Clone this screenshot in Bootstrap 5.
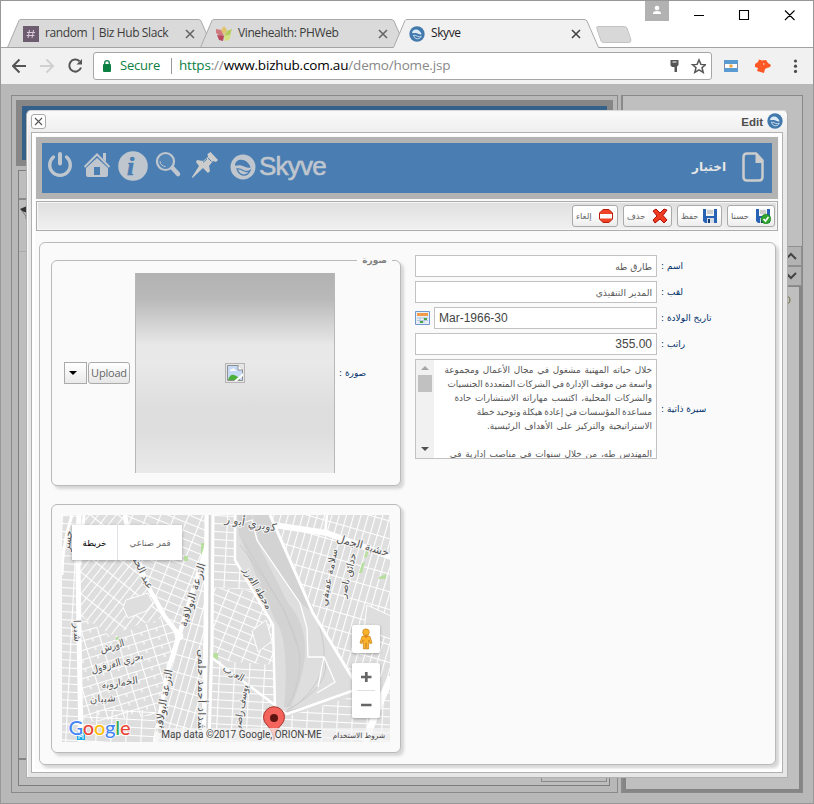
<!DOCTYPE html>
<html lang="en">
<head>
<meta charset="utf-8">
<title>Skyve</title>
<link href="https://cdn.jsdelivr.net/npm/bootstrap@5.3.0/dist/css/bootstrap.min.css" rel="stylesheet">
<style>
body{width:814px;height:804px;overflow:hidden;font-family:"Liberation Sans","DejaVu Sans",sans-serif;font-size:12px;line-height:1.2;color:#444}
svg{display:block;flex:none}
.win{width:814px;height:804px;border:1px solid #979797;background:#b8b8b8}
.chrome-ui{font-family:"Open Sans","Noto Sans",sans-serif}
.titlebar{height:47px;background:#fff;padding-left:6px}
.titlebar::after{content:"";position:absolute;left:0;right:0;bottom:0;height:1px;background:#a3a3a3}
.tab{width:206px;height:29px;font-size:12px;letter-spacing:-.4px;margin-right:-13px;padding-left:16px;color:#3c3c3c}
.tab>.shape{position:absolute;left:0;top:0}
.tab .lbl{width:140px;margin-left:6px;white-space:nowrap}
.tab.front{z-index:3;color:#222}
.newtab{margin-left:10px}
.tool{height:36px;background:#f1f1f1;padding:4px 0 4px 11px}
.omni{width:620px;height:28px;border:1px solid #a6a6a6;border-radius:3px;background:#fff;font-size:13.5px;padding:0 5px 1px 8px;color:#888;white-space:nowrap}
.secure{width:42px;margin:0 9px 0 8px;font-size:13px;letter-spacing:-.2px}
.addr{letter-spacing:-.18px;margin-left:7px}
.green{color:#0b8043}
.sep{width:1px;height:16px;background:#999}
.page{height:719px}
.back{padding:11px 10px 10px 10px;height:719px}
.bk-l{width:607px;border:1px solid #8a8a8a;padding:4px}
.bk-r{width:182px;border:1px solid #8a8a8a;border-left-width:2px;background:#bfbfbf}
.bk-space{height:150px}
.bk-head{height:66px;background:#356089;border:6px solid #868686}
.bk-body{margin:4px 3px 2px 2px;border:1px solid #7e7e7e;height:616px;background:#bdbdbd}
.bk-body>.r1{height:29px;border-bottom:2px solid #8a8a8a}
.bk-body>.r2{height:52px;background:#bdbdbd;padding-top:5px;border-bottom:1px solid #aaa}
.bk-body>.r3{height:508px;border-bottom:2px solid #858585}
.bk-body>.r4{width:66px;border:1px solid #8a8a8a;height:22px;margin-right:2px}
.bk-btn{height:20px;border:1px solid #8f8f8f;background:#b3b3b3;padding-right:4px}
.bk-low{border:3px solid #858585;border-width:1px 3px 3px;background:#bfbfbf}
.dlg{position:absolute;left:25px;top:26px;width:762px;height:668px;border:1px solid #b0b0b0;border-top-color:#d8d8d8;border-radius:5px 5px 0 0;background:linear-gradient(#fafafa,#e9e9e9 30px,#e6e6e6);box-shadow:inset 1px 1px #f8f8f8;padding:0 4px 4px}
.dlg-head{height:21px;font-size:11.5px;font-weight:bold;color:#4d4d4d;padding-bottom:2px}
.xbtn{width:15px;height:15px;border:1px solid #a9a9a9;border-radius:3px;background:#fff;margin-top:2px}
.frame{width:752px;height:641px;border:1px solid #b0b0b0;background:#fafafa;padding:4px;box-shadow:inset 0 0 0 3px #fff}
.banner{height:62px;border:6px solid #b3b3b3;background:#4a7eb2;color:#c0c6ce;padding:0 8px 2px 5px}
.brand{font-size:26px;color:#c0c6ce;-webkit-text-stroke:.6px #c0c6ce;letter-spacing:-.8px;margin-left:3px}
.title{font:bold 12px "DejaVu Sans",sans-serif;color:#e6e6e6}
.bar{height:30px;margin-top:2px;border:1px solid #acacac;background:linear-gradient(#dfdfdf,#f1f1f1);box-shadow:inset 0 0 0 1px #f6f6f6;padding:0 2px;gap:5px}
.tb{height:22px;border:1px solid #aaa;border-radius:3px;background:linear-gradient(#fff,#fff 40%,#ececec);font:8.5px "DejaVu Sans",sans-serif;color:#666;padding:0 3px}
.w46{width:46px}.w49{width:49px}.w45{width:45px}.w48{width:48px}
.pane{background:#fafafa;border:1px solid #bababa;border-radius:6px;box-shadow:3px 3px 3px #d6d6d6}
.main-pane{width:737px;height:523px;margin:11px 0 0 3px;padding:12px 11px}
.fset{width:350px;height:226px;margin-top:5px;padding:12px}
.legend-txt{position:absolute;top:-9px;right:8px;background:#fafafa;padding:0 5px;font:bold 9px/16px "DejaVu Sans",sans-serif;color:#808080}
.map-pane{width:350px;height:249px;margin-top:18px;padding:10px}
.up-sel{width:23px;height:22px;border:1px solid #aaa;background:linear-gradient(#fff,#eaeaea)}
.up{width:42px;height:22px;border:1px solid #aaa;border-radius:3px;background:linear-gradient(#fff,#e6e6e6);margin:0 5px 0 1px;font:11px/20px "Open Sans",sans-serif;letter-spacing:-.2px;color:#666}
.pic{width:200px;height:200px;border:1px solid #b8b8b8;border-width:0 1px;background:linear-gradient(#b2b2b2,#b9b9b9 13%,#e8e8e8 36%,#e9e9e9 44%,#dedede 67%,#dedede 80%,#eaeaea)}
.brk{width:20px;height:20px;border:1px solid #b5b5b5;background:#e6e6e6}
.cap{font:9px "DejaVu Sans",sans-serif;color:#003168;margin-left:4px;white-space:nowrap}
.form-col{margin-left:14px;gap:4px}
.fld{width:242px;height:22px;border:1px solid #c2c2c2;background:#fff;padding:0 4px;color:#444;white-space:nowrap}
.fld.short{width:223px}
.ar{font:9.2px "DejaVu Sans",sans-serif;color:#555}
.area{width:242px;height:100px;border:1px solid #c2c2c2;background:#fff;overflow:hidden}
.sb{width:18px;flex:none;background:#f1f1f1;padding:6px 0}
.thumb{width:14px;height:17px;background:#c1c1c1}
.lines{font:8.9px/14px "DejaVu Sans",sans-serif;color:#555;padding:3px 4px 0 0;white-space:nowrap}
.wp{word-spacing:1px}.wm{word-spacing:-.9px}
.map{width:328px;height:227px;overflow:hidden}
.mt{position:absolute;left:10px;top:10px;height:35px;background:#fff;box-shadow:0 1px 3px rgba(0,0,0,.3);font:8.5px "DejaVu Sans",sans-serif;color:#666}
.mt .m1{width:46px}.mt .m2{width:64px}
.ctl{position:absolute;left:290px;width:28px;background:#fff;border-radius:2px;box-shadow:0 1px 3px rgba(0,0,0,.3)}
.peg{top:110px;height:28px}.zoomer{top:148px;height:55px}
.attr{position:absolute;right:0;bottom:0;height:14px;font:10px/14px Roboto,sans-serif;color:#444;background:rgba(245,245,245,.7);padding:0 5px 0 6px;white-space:nowrap}
.attr .ar2{font:7.3px/14px "DejaVu Sans",sans-serif;margin-left:11px}
</style>
<script src="https://cdn.jsdelivr.net/npm/bootstrap@5.3.0/dist/js/bootstrap.bundle.min.js"></script>
</head>
<body>
<svg width="0" height="0" class="position-absolute">
<symbol id="x" viewBox="0 0 10 10"><path d="M1 1 9 9M9 1 1 9" stroke="currentColor" stroke-width="1.6" fill="none"/></symbol>
<symbol id="sky" viewBox="0 0 26 26"><circle cx="13" cy="13" r="12.5" fill="currentColor"/><path d="M5 11.500C5 5 13 4 17 8C19 10 20.500 12 20.500 13.500C17 14.500 14 12 11 11.500C8 11 6 12 5 11.500Z" fill="var(--c)"/><path d="M7 15Q10 14.500 13 16.500 17 18.500 20 16.500 18 21.500 13 21 9 20.500 7 15Z" fill="none" stroke="var(--c)" stroke-width="1.300"/></symbol>
<symbol id="disk" viewBox="0 0 16 16"><path d="M1 1h14v14H3L1 13Z" fill="#2862b4"/><path d="M4 1h8v7H4Z" fill="#f4f4f4"/><path d="M5 3h6M5 5h6" stroke="#aaa"/><path d="M5 10h7v5H5Z" fill="#d5dce4"/><path d="M6 11h2v4H6Z" fill="#173e75"/></symbol>
</svg>
<div class="win d-flex flex-column">
 <div class="chrome-ui titlebar position-relative d-flex align-items-end">
  <div class="tab position-relative d-flex align-items-center">
   <svg class="shape" width="206" height="29"><path d="M.5 28.500 12 1.500Q12.500 .5 14 .5H191Q193 .5 194 2L205.500 28.500" fill="#dadada" stroke="#a9a9a9"/></svg>
   <svg class="position-relative" width="16" height="16"><rect width="16" height="16" fill="#6d5b70"/><path d="M6.500 4 5 12M10.500 4 9 12M4 6.500h8M3.500 9.500h8" stroke="#d9c9d9" fill="none"/></svg>
   <span class="lbl position-relative">random | Biz Hub Slack</span>
   <svg class="position-relative" width="10" height="10" color="#666"><use href="#x"/></svg>
  </div>
  <div class="tab position-relative d-flex align-items-center">
   <svg class="shape" width="206" height="29"><path d="M.5 28.500 12 1.500Q12.500 .5 14 .5H191Q193 .5 194 2L205.500 28.500" fill="#dadada" stroke="#a9a9a9"/></svg>
   <svg class="position-relative" width="16" height="16"><path d="M8 0 11 4 8 9 5 4Z" fill="#e0c36a"/><path d="M0 3 5 4 8 10 4 10 0 7Z" fill="#cf7a80"/><path d="M16 3 11 5 8 10 14 9Z" fill="#b5cc5a"/><path d="M1 9 8 10 7 15 3 14Z" fill="#b8485c"/><path d="M15 9 8 10 9 15 13 14Z" fill="#d3e27c"/></svg>
   <span class="lbl position-relative">Vinehealth: PHWeb</span>
   <svg class="position-relative" width="10" height="10" color="#666"><use href="#x"/></svg>
  </div>
  <div class="tab front position-relative d-flex align-items-center">
   <svg class="shape" width="206" height="29"><path d="M.5 28.500 12 1.500Q12.500 .5 14 .5H191Q193 .5 194 2L205.500 28.500V29H0Z" fill="#f1f1f1"/><path d="M.5 28.500 12 1.500Q12.500 .5 14 .5H191Q193 .5 194 2L205.500 28.500" fill="none" stroke="#a9a9a9"/></svg>
   <svg class="position-relative" width="16" height="16" style="--c:#dcebf5" color="#4279ad"><use href="#sky"/></svg>
   <span class="lbl position-relative">Skyve</span>
   <svg class="position-relative" width="10" height="10" color="#444"><use href="#x"/></svg>
  </div>
  <svg class="newtab mb-1" width="36" height="18"><path d="M2 .5H28Q30 .5 31 2L35 14Q35 16.500 33 16.500H8Q6 16.500 5 15L1 3Q0 .5 2 .5Z" fill="#d8d8d8" stroke="#c3c3c3"/></svg>
  <div class="ms-auto d-flex align-self-start">
   <svg width="24" height="20"><path d="M0 0h24v20H0Z" fill="#b2b2b2"/><circle cx="12" cy="7" r="2.300" fill="#fff"/><path d="M8 13V12Q8.500 10 12 10T16 12V13Z" fill="#fff"/></svg>
   <svg width="144" height="30" fill="none" stroke="#000" stroke-width="1.100"><path d="M25 14.500h10M70.500 9.500h9v9h-9ZM116 9.500l9.500 9.500M125.500 9.500l-9.500 9.500"/></svg>
  </div>
 </div>
 <div class="chrome-ui tool d-flex align-items-center">
  <svg width="81" height="20" fill="none" stroke="#555" stroke-width="2"><path d="M14 10H1M7.500 3.500 1 10 7.500 16.500"/><path d="M28 10H41M34.500 3.500 41 10 34.500 16.500" stroke="#d0d0d0"/><path d="M67.500 5.300A6 6 0 1 0 69 11.500"/><path d="M70 3V8.500H64.500Z" fill="#555" stroke="none"/></svg>
  <div class="omni d-flex align-items-center">
   <svg width="10" height="14"><path d="M2 5h6q1 0 1 1v6q0 1-1 1H2q-1 0-1-1V6q0-1 1-1Z" fill="#0b8043"/><path d="M2.700 6V4a2.300 2.300 0 0 1 4.600 0V6" stroke="#0b8043" stroke-width="1.300" fill="none"/></svg>
   <span class="green secure">Secure</span><span class="sep"></span>
   <span class="addr"><span class="green">https</span>://<span class="text-black">www.bizhub.com.au</span>/demo/home.jsp</span>
   <svg class="ms-auto" width="36" height="16"><path d="M.5 2h8v5L7 8.500v5.500H4.500V9H2L.5 7.500Z" fill="#555"/><path d="M2.500 4h4" stroke="#fff"/><path d="M29 2 30.900 6.400 35.500 6.700 32 9.800 33.200 14.300 29 11.800 24.800 14.300 26 9.800 22.500 6.700 27.100 6.400Z" fill="none" stroke="#555" stroke-width="1.500"/></svg>
  </div>
  <svg width="101" height="20"><path d="M12.500 4.500h13v11h-13Z" fill="#fff" stroke="#889"/><path d="M12 4h14v4H12ZM12 12h14v4H12Z" fill="#5a9bd2"/><circle cx="19" cy="10" r="1.800" fill="#f0a848"/><path d="M43 8 46 6 47 3.500 50 4.500 54 4 56 7 59 9 58 11 55 12 53 13 52 17 45 15 46 12 43 11Z" fill="#fd5825"/><path d="M51 8h1.500" stroke="#fff"/><g fill="#4d4d4d"><circle cx="83.500" cy="5" r="1.600"/><circle cx="83.500" cy="10.200" r="1.600"/><circle cx="83.500" cy="15.400" r="1.600"/></g></svg>
 </div>
 <div class="page position-relative">
  <div class="back d-flex justify-content-between">
   <div class="bk-l">
    <div class="bk-head"></div>
    <div class="bk-body"><div class="r1"></div><div class="r2"><svg width="8" height="14"><path d="M1 4 8 1V8L3 6Z" fill="#333"/><path d="M3 6 7 11V14" stroke="#777" fill="none"/></svg></div><div class="r3"></div><div class="r4 ms-auto"></div></div>
   </div>
   <div class="bk-r d-flex flex-column">
    <div class="bk-space"></div>
    <div class="bk-btn d-flex align-items-center justify-content-end"><svg width="12" height="8"><path d="M1 7 6 2 11 7" fill="none" stroke="#444" stroke-width="2"/></svg></div>
    <div class="bk-btn d-flex align-items-center justify-content-end"><svg width="12" height="8"><path d="M1 1 6 6 11 1" fill="none" stroke="#444" stroke-width="2"/></svg></div>
    <div class="bk-low flex-fill d-flex justify-content-end pt-2 pe-2"><svg width="6" height="11"><path d="M0 1Q5 1 5 5T0 9" stroke="#6b6b3c" fill="none"/></svg></div>
   </div>
  </div>
  <div class="dlg">
   <div class="dlg-head d-flex align-items-center">
    <div class="xbtn d-flex align-items-center justify-content-center"><svg width="9" height="9"><path d="M1 1 8 8M8 1 1 8" stroke="#555" stroke-width="1.100"/></svg></div>
    <span class="ms-auto me-1 pt-1">Edit</span>
    <svg width="16" height="16" style="--c:#dcebf5" color="#4279ad"><use href="#sky"/></svg>
   </div>
   <div class="frame">
    <div class="banner d-flex align-items-center">
     <svg width="183" height="36" fill="#c0c6ce" stroke="none">
      <path d="M6.500 8A10.300 10.300 0 1 0 19.500 8" fill="none" stroke="#c0c6ce" stroke-width="3.300" stroke-linecap="round"/><path d="M13 5V14.500" stroke="#c0c6ce" stroke-width="4" stroke-linecap="round"/>
      <path d="M37.500 18 50 5.500 62.500 18" fill="none" stroke="#c0c6ce" stroke-width="2"/><path d="M56 4h3V13L56 10ZM50 9 61 19V26Q61 28 59 28H41Q39 28 39 26V19Z"/><path d="M47 18h6v8h-6Z" fill="#4a7eb2"/>
      <circle cx="86" cy="17" r="14.800"/><text x="80" y="26" font-family="Liberation Serif,serif" font-style="italic" font-weight="bold" font-size="26" fill="#4a7eb2" stroke="#4a7eb2" stroke-width=".6">i</text>
      <circle cx="118.500" cy="12.500" r="8.500" fill="#6b96c0" fill-opacity=".3" stroke="#c0c6ce" stroke-width="2.200"/><path d="M113 12a5.500 5.500 0 0 0 5.500 5.500" fill="none" stroke="#c0c6ce"/><path d="M125.500 19 131 25" stroke="#c0c6ce" stroke-width="4.500" stroke-linecap="round"/>
      <path d="M163.500 3 171 11 169 13 166 12 162 17 163 22 161 24 156 19 145.500 29 145 28 152 17 149 13 150 11 156 12 161 8 160.500 5Z" fill="#ccc"/><path d="M156 13.500 160 10M161 9 164.500 12.500" stroke="#4a7eb2"/>
     </svg>
     <svg width="26" height="26" style="--c:#4a7eb2" color="#c0c6ce"><use href="#sky"/></svg>
     <span class="brand">Skyve</span>
     <span class="title ms-auto" dir="rtl">اختبار</span>
     <svg class="ms-3" width="22" height="30"><path d="M5 1.500H14L20.500 8.500V25Q20.500 28.500 17 28.500H5Q1.500 28.500 1.500 25V5Q1.500 1.500 5 1.500Z" fill="none" stroke="#ccc" stroke-width="2.500"/><path d="M13.500 1V11H21V8L15 1Z" fill="#ccc"/></svg>
    </div>
    <div class="bar d-flex align-items-center justify-content-end">
     <div class="tb w46 d-flex align-items-center justify-content-between"><span dir="rtl">إلغاء</span><svg width="16" height="16"><path d="M5 1.500h6L14.500 5v6L11 14.500H5L1.500 11V5Z" fill="#f04428" stroke="#b51c0c"/><path d="M2 6h12v4.500H2Z" fill="#fff"/></svg></div>
     <div class="tb w49 d-flex align-items-center justify-content-between"><span dir="rtl">حذف</span><svg width="16" height="16"><path d="M1 3 4 1 8 5 12 1 15 2 11 7.500 15 12 12 15 8 11 3 15 1 12 5 8Z" fill="#ee3b22" stroke="#b01208"/></svg></div>
     <div class="tb w45 d-flex align-items-center justify-content-between"><span dir="rtl">حفظ</span><svg width="16" height="16"><use href="#disk"/></svg></div>
     <div class="tb w48 d-flex align-items-center justify-content-between"><span dir="rtl">حسنا</span><svg width="16" height="16"><use href="#disk"/><circle cx="11" cy="11" r="4.800" fill="#2fa52f" stroke="#147a1c" stroke-width=".6"/><path d="M8.500 11 10.500 13 13.500 9" stroke="#fff" stroke-width="1.600" fill="none"/></svg></div>
    </div>
    <div class="pane main-pane d-flex">
     <div class="d-flex flex-column">
      <div class="pane fset position-relative d-flex align-items-center">
       <span class="legend-txt" dir="rtl">صورة</span>
       <div class="up-sel ps-1 d-flex align-items-center"><svg width="8" height="4"><path d="M0 0h8L4 4Z" fill="#000"/></svg></div>
       <div class="up text-center">Upload</div>
       <div class="pic d-flex align-items-center justify-content-center"><div class="brk d-flex align-items-center justify-content-center"><svg width="16" height="16"><path d="M.5.5H11L15.500 5V15.500H.5Z" fill="#c6d9f5" stroke="#8f8f8f"/><path d="M3 6q0-2 2-2 2-2 3 1 2 0 1 1Z" fill="#fff"/><path d="M1 15Q3 9 7 10 11 11 13 15Z" fill="#4caf3a"/><path d="M11 0V5H16" fill="#fff" stroke="#8f8f8f"/><path d="M16 8 7 16H10L16 11Z" fill="#fff"/></svg></div></div>
       <span class="cap" dir="rtl">صورة :</span>
      </div>
      <div class="pane map-pane">
       <div class="map position-relative">
        <svg width="329" height="227" viewBox="0 0 329 227">
         <defs>
          <pattern id="g1" width="16" height="9" patternUnits="userSpaceOnUse" patternTransform="rotate(-17)"><path d="M0 .5H16M.5 0V9M9 0V4" stroke="#fff" stroke-width="1.200"/></pattern>
          <pattern id="g2" width="7" height="17" patternUnits="userSpaceOnUse" patternTransform="rotate(16)"><path d="M0 .5H7M.5 0V17" stroke="#fff" stroke-width="1.200"/></pattern>
          <pattern id="g3" width="15" height="8" patternUnits="userSpaceOnUse" patternTransform="rotate(3)"><path d="M0 .5H15M.5 0V8" stroke="#fff" stroke-width="1.200"/></pattern>
          <pattern id="g4" width="17" height="7" patternUnits="userSpaceOnUse" patternTransform="rotate(-52)"><path d="M0 .5H17M.5 0V7" stroke="#fff" stroke-width="1.200"/></pattern>
          <pattern id="g5" width="13" height="8" patternUnits="userSpaceOnUse" patternTransform="rotate(22)"><path d="M0 .5H13M.5 0V8" stroke="#fff" stroke-width="1.200"/></pattern>
         </defs>
         <rect width="329" height="227" fill="#dedede"/>
         <path d="M0 0H17V227H0Z" fill="url(#g3)"/>
         <path d="M17 0H63L69 30 103 102 70 112 50 120 17 100Z" fill="url(#g4)"/>
         <path d="M17 100 50 122 103 102 117 120 106 155 93 200 17 208Z" fill="url(#g1)"/>
         <path d="M63 0H145V35L117 120 103 102 88 75Z" fill="url(#g5)"/>
         <path d="M145 35V120L143 227H93L117 120Z" fill="url(#g2)"/>
         <path d="M17 195H93V227H17Z" fill="url(#g3)"/>
         <path d="M150 0H175V45L190 75 150 72Z" fill="url(#g3)"/>
         <path d="M150 72 190 76 211 110 213 150 150 145Z" fill="url(#g5)"/>
         <path d="M146 145 213 150V192L230 200 328 170V227H143Z" fill="url(#g3)"/>
         <path d="M208 0H329V162H291L251 98Z" fill="url(#g2)"/>
         <path d="M64 85 86 78 91 88 84 96 66 103 61 92ZM190 116 204 105 210 126 196 137ZM305 90 329 101V124L302 115Z" fill="#dedede" stroke="#fff"/>
         <path d="M175 0 173 45 211 110 213 192 225 199 290 176 291 162 251 98 208 0Z" fill="#dedede"/>
         <path d="M177 20 213 105Q228 125 222 192L229 192Q242 160 243 140 245 110 226 88L194 25 190 0H175ZM191 0H208L251 98 238 88 197 28Z" fill="#d3d3d3"/>
         <path d="M233 60Q270 120 260 155 252 180 224 197L273 183 291 176M181 25 222 95 235 130M178 30Q240 110 238 150 236 175 225 192M262 140Q272 170 225 195" stroke="#cbcbcb" fill="none"/>
         <path d="M180 8 190 5 195 25 238 88 245 113 246 142H262L273 167 255 178M262 142 256 172" stroke="#fff" fill="none" stroke-width="1.300"/>
         <path d="M139 28h4v12h-4ZM122 41h4v5h-4ZM148 138h8v7l-8-4ZM54 122h3v3h-3ZM304 35l4-4-3 11-3 1ZM300 48l3-1-3 11h-3ZM317 62l7-3v5h-7Z" fill="#b9dfa0"/>
         <g fill="none" stroke="#fff" stroke-linejoin="round">
          <path d="M10 0Q0 30 0 60M22 0 18 50" stroke-width="3"/>
          <path d="M17 0 16 45 17 118 19 227" stroke-width="5"/>
          <path d="M63 0 68 28 88 75 103 102 117 120" stroke-width="4.500"/><circle cx="117" cy="121" r="4" fill="#fff"/>
          <path d="M145 30 117 120 106 155 93 227" stroke-width="4.500"/>
          <path d="M145 0 144 110 142 227" stroke-width="5"/><path d="M151 0 150 130 147 227" stroke-width="3"/>
          <path d="M208 0 251 98 291 164" stroke-width="3"/><path d="M212 10 265 18 329 42" stroke-width="6"/>
          <path d="M173 0V45L211 110 213 192 225 199 290 176M150 143 213 190M265 0 263 18" stroke-width="2.500"/>
          <path d="M329 162 315 195 303 227" stroke-width="7"/>
         </g>
         <path d="M147.500 0 147 130 144.500 227" stroke="#d0d0d0" stroke-width="1.500" fill="none"/>
         <g font-family="DejaVu Sans,sans-serif" font-size="10" fill="#555" stroke="#f4f4f4" stroke-width="2" paint-order="stroke" text-anchor="middle">
          <text transform="translate(9,26) rotate(-82)">جسر</text>
          <text transform="translate(12,116) rotate(88)" textLength="22">شبرا</text>
          <text transform="translate(76,55) rotate(64)">عبد الحميد</text>
          <text transform="translate(134,81) rotate(-73)" font-size="11" textLength="66">الترعة البولاقية</text>
          <text transform="translate(105,187) rotate(-80)" font-size="11" textLength="65">الترعة البولاقية</text>
          <text transform="translate(136,175) rotate(90)" font-size="11" textLength="82">شداد أحمد حلمى</text>
          <text transform="translate(51,134) rotate(-16)" textLength="25">الورش</text>
          <text transform="translate(56,151) rotate(-16)" textLength="54">بحري الفرفول</text>
          <text transform="translate(58,171) rotate(-8)" textLength="37">الخمارويه</text>
          <text transform="translate(41,187) rotate(-4)" textLength="26">شيبان</text>
          <text transform="translate(193,75) rotate(59)" textLength="47">محطة الفرز</text>
          <text transform="translate(170,161) rotate(30)" textLength="23">العرب</text>
          <text transform="translate(182,194) rotate(-80)" textLength="48">يوسف راضي</text>
          <text transform="translate(188,12) rotate(10)" font-size="11" textLength="52">كوبري أبو ر</text>
          <text transform="translate(300,34) rotate(16)" font-size="11" textLength="54">خشبة الجمل</text>
          <text transform="translate(270,63) rotate(-79)" textLength="58">سلامة عفيفي</text>
          <text transform="translate(289,61) rotate(-76)" textLength="46">حدائق ناصر</text>
         </g>
         <rect x="15" y="217" width="8" height="8" fill="#1ca9e6"/><path d="M17 224V219L19 222 21 219V224" stroke="#fff" fill="none"/>
         <text x="6.500" y="220" font-family="Lato,sans-serif" font-size="20" font-weight="500" textLength="62" stroke="#fff" stroke-width="1.600" paint-order="stroke"><tspan fill="#4285f4">G</tspan><tspan fill="#ea4335">o</tspan><tspan fill="#fbbc05">o</tspan><tspan fill="#4285f4">g</tspan><tspan fill="#34a853">l</tspan><tspan fill="#ea4335">e</tspan></text>
         <path d="M212 226Q211 216 205 210A10.500 10.500 0 1 1 219 210Q213 216 212 226Z" fill="#f4645c" stroke="#a8352d"/><circle cx="212" cy="203" r="4" fill="#5e1411"/>
        </svg>
        <div class="attr">Map data ©2017 Google, ORION-ME<span class="ar2" dir="rtl">شروط الاستخدام</span></div>
        <div class="mt d-flex"><span class="m1 d-flex align-items-center justify-content-center text-black border-end" dir="rtl">خريطة</span><span class="m2 d-flex align-items-center justify-content-center" dir="rtl">قمر صناعي</span></div>
        <div class="ctl peg d-flex justify-content-center align-items-center"><svg width="14" height="22" fill="#fbb32b" stroke="#c58012" stroke-width=".7"><path d="M3 8.500Q7 6 11 8.500L13 15 11 15.500 10 12 9.500 21H7.500L7 15 6.500 21H4.500L4 12 3 15.500 1 15Z"/><circle cx="7" cy="4.200" r="3.300"/><path d="M5 8 7 10 9 8Z" fill="#e87817" stroke="none"/></svg></div>
        <div class="ctl zoomer d-flex justify-content-center"><svg width="28" height="55" stroke="#666"><path d="M9 14h10.500M14.300 9v10M9 42h10.500" stroke-width="2.700"/><path d="M5 27.500h18" stroke="#e0e0e0"/></svg></div>
       </div>
      </div>
     </div>
     <div class="form-col d-flex flex-column">
      <div class="d-flex align-items-center"><div class="fld ar d-flex align-items-center justify-content-end"><span dir="rtl">طارق طه</span></div><span class="cap" dir="rtl">اسم :</span></div>
      <div class="d-flex align-items-center"><div class="fld ar d-flex align-items-center justify-content-end"><span dir="rtl">المدير التنفيذي</span></div><span class="cap" dir="rtl">لقب :</span></div>
      <div class="d-flex align-items-center"><svg class="me-1" width="15" height="14" viewBox="0 0 15 14"><path d="M.5.5h14v13H.5Z" fill="#e8eef6" stroke="#6f98cc"/><path d="M2 2h11v3H2Z" fill="#f39a4a"/><path d="M2 7h11M2 9.500h11M5 6v6M9 6v6" stroke="#b5c7dd"/><path d="M9 7h3v2H9ZM5 10h3v2H5Z" fill="#4aa546"/></svg><div class="fld short d-flex align-items-center">Mar-1966-30</div><span class="cap" dir="rtl">تاريخ الولادة :</span></div>
      <div class="d-flex align-items-center"><div class="fld d-flex align-items-center justify-content-end">355.00</div><span class="cap" dir="rtl">راتب :</span></div>
      <div class="d-flex align-items-center"><div class="area d-flex"><div class="sb d-flex flex-column align-items-center"><svg width="8" height="5"><path d="M0 4 4 0 8 4Z" fill="#a5a5a5"/></svg><div class="thumb mt-1"></div><svg class="mt-auto" width="8" height="5"><path d="M0 0 4 4 8 0Z" fill="#505050"/></svg></div>
       <div class="lines flex-fill" dir="rtl"><div class="wp">خلال حياته المهنية مشغول في مجال الأعمال ومجموعة</div><div class="wm">واسعة من موقف الإدارة في الشركات المتعددة الجنسيات</div><div class="wp">والشركات المحلية، اكتسب مهاراته الاستشارات حادة</div><div class="wm">مساعدة المؤسسات في إعادة هيكلة وتوحيد خطة</div><div class="wp">الاستراتيجية والتركيز على الأهداف الرئيسية.</div><div>&nbsp;</div><div class="wp">المهندس طه، من خلال سنوات في مناصب إدارية في</div></div></div><span class="cap" dir="rtl">سيرة ذاتية :</span></div>
     </div>
    </div>
   </div>
  </div>
 </div>
</div>
</body>
</html>
